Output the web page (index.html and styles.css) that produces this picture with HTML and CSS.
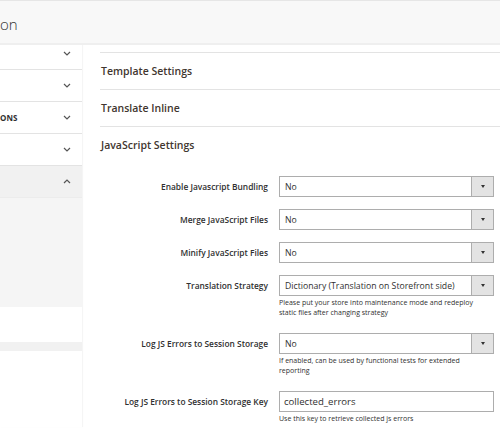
FILE: index.html
```html
<!DOCTYPE html>
<html lang="en">
<head>
<meta charset="utf-8">
<title>Configuration</title>
<link rel="stylesheet" href="styles.css">
</head>
<body>
<div class="page">
  <header class="page-header">
    <h1 class="page-title">on</h1>
  </header>
  <div class="layout">
    <nav class="side">
      <div class="tab"><span class="tab-label"></span><svg class="chev" viewBox="0 0 8 5"><polyline points="1,1 4,4 7,1"/></svg></div>
      <div class="tab"><span class="tab-label"></span><svg class="chev" viewBox="0 0 8 5"><polyline points="1,1 4,4 7,1"/></svg></div>
      <div class="tab"><span class="tab-label">ONS</span><svg class="chev" viewBox="0 0 8 5"><polyline points="1,1 4,4 7,1"/></svg></div>
      <div class="tab"><span class="tab-label"></span><svg class="chev" viewBox="0 0 8 5"><polyline points="1,1 4,4 7,1"/></svg></div>
      <div class="tab tab-active"><span class="tab-label"></span><svg class="chev" viewBox="0 0 8 5"><polyline points="1,4 4,1 7,4"/></svg></div>
      <div class="tab-items"></div>
      <div class="side-gap"></div>
      <div class="tab-next"></div>
    </nav>
    <main class="content">
      <section class="group">
        <h2 class="group-title">Template Settings</h2>
      </section>
      <section class="group">
        <h2 class="group-title">Translate Inline</h2>
      </section>
      <section class="group">
        <h2 class="group-title">JavaScript Settings</h2>
        <div class="fields">
          <div class="row">
            <div class="label">Enable Javascript Bundling</div>
            <div class="control">
              <div class="select"><span class="value">No</span><span class="btn"><span class="caret"></span></span></div>
            </div>
          </div>
          <div class="row">
            <div class="label">Merge JavaScript Files</div>
            <div class="control">
              <div class="select"><span class="value">No</span><span class="btn"><span class="caret"></span></span></div>
            </div>
          </div>
          <div class="row">
            <div class="label">Minify JavaScript Files</div>
            <div class="control">
              <div class="select"><span class="value">No</span><span class="btn"><span class="caret"></span></span></div>
            </div>
          </div>
          <div class="row">
            <div class="label">Translation Strategy</div>
            <div class="control">
              <div class="select"><span class="value">Dictionary (Translation on Storefront side)</span><span class="btn"><span class="caret"></span></span></div>
              <p class="note">Please put your store into maintenance mode and redeploy static files after changing strategy</p>
            </div>
          </div>
          <div class="row">
            <div class="label">Log JS Errors to Session Storage</div>
            <div class="control">
              <div class="select"><span class="value">No</span><span class="btn"><span class="caret"></span></span></div>
              <p class="note">If enabled, can be used by functional tests for extended reporting</p>
            </div>
          </div>
          <div class="row">
            <div class="label">Log JS Errors to Session Storage Key</div>
            <div class="control">
              <div class="input"><span class="value">collected_errors</span></div>
              <p class="note">Use this key to retrieve collected js errors</p>
            </div>
          </div>
        </div>
      </section>
    </main>
  </div>
</div>
</body>
</html>
```
FILE: styles.css
```css
* { box-sizing: border-box; }

html, body {
  margin: 0;
  padding: 0;
  background: #ffffff;
}

body {
  font-family: "Open Sans", "Noto Sans", "Liberation Sans", sans-serif;
  color: #303030;
}

.page {
  width: 500px;
  height: 440px;
  overflow: hidden;
}

.page-header {
  position: relative;
  z-index: 2;
  height: 45px;
  background: #f8f8f8;
  border-top: 1px solid #e6e6e6;
  border-bottom: 2px solid #efefef;
  display: flex;
  align-items: center;
  padding-top: 5px;
}

.page-title {
  margin: 0;
  font-size: 15px;
  font-weight: 300;
  color: #333333;
  line-height: 1;
}

.layout {
  display: flex;
  margin-top: -7px;
  width: 520px;
}

/* sidebar */
.side {
  width: 82px;
  flex: 0 0 82px;
  display: flex;
  flex-direction: column;
  box-shadow: 1px 0 1px rgba(0,0,0,0.04);
}

.tab {
  height: 32px;
  border-bottom: 1px solid #e3e3e3;
  display: flex;
  align-items: center;
  justify-content: space-between;
  padding-right: 11px;
  background: #ffffff;
}

.tab-active {
  background: #f1f1f1;
  border-bottom-color: #ececec;
}

.tab-label {
  font-size: 8px;
  font-weight: 700;
  color: #303030;
  letter-spacing: 0.1px;
}

.chev {
  width: 8px;
  height: 5px;
  fill: none;
  stroke: #555555;
  stroke-width: 1.2;
}

.tab-items {
  height: 109px;
  background: #f5f5f5;
}

.side-gap {
  height: 35px;
}

.tab-next {
  height: 9px;
  background: #f1f1f1;
}

/* content */
.content {
  flex: 1;
  margin-left: 18px;
  padding-top: 14px;
}

.group {
  border-top: 1px solid #e3e3e3;
}

.group-title {
  margin: 0;
  height: 36px;
  display: flex;
  align-items: center;
  padding-left: 1px;
  font-size: 10.5px;
  font-weight: 600;
  color: #41362f;
}

.fields {
  padding-top: 13px;
  display: flex;
  flex-direction: column;
  gap: 12px;
}

.row {
  display: grid;
  grid-template-columns: 168px 215px;
  column-gap: 11px;
  align-items: start;
}

.label {
  text-align: right;
  font-size: 8.4px;
  font-weight: 600;
  line-height: 21px;
  color: #303030;
  white-space: nowrap;
}

.select,
.input {
  height: 21px;
  border: 1px solid #adadad;
  display: flex;
  align-items: center;
  background: #ffffff;
}

.value {
  flex: 1;
  padding-left: 5px;
  font-size: 8.7px;
  color: #303030;
  white-space: nowrap;
}

.input .value {
  font-size: 9.6px;
  padding-left: 4px;
}

.btn {
  width: 22px;
  height: 100%;
  background: #e3e3e3;
  border-left: 1px solid #adadad;
  display: flex;
  align-items: center;
  justify-content: center;
}

.caret {
  width: 0;
  height: 0;
  border-left: 2.5px solid transparent;
  border-right: 2.5px solid transparent;
  border-top: 3px solid #333333;
}

.note {
  margin: 2px 0 3px 0;
  font-size: 7px;
  line-height: 10px;
  color: #303030;
  padding-right: 10px;
}
```
